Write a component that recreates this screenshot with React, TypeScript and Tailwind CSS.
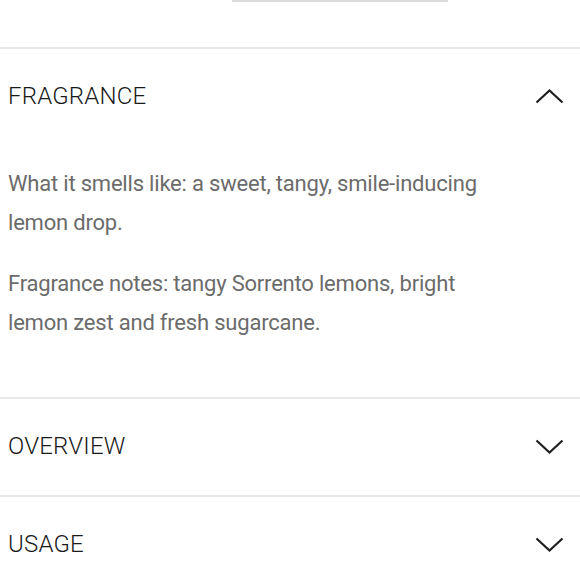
import { useState } from 'react';

type Section = {
  title: string;
  body?: string[];
};

const sections: Section[] = [
  {
    title: 'FRAGRANCE',
    body: [
      'What it smells like: a sweet, tangy, smile-inducing lemon drop.',
      'Fragrance notes: tangy Sorrento lemons, bright lemon zest and fresh sugarcane.',
    ],
  },
  { title: 'OVERVIEW' },
  { title: 'USAGE' },
];

const Chevron = ({ up }: { up: boolean }) => (
  <svg width="29" height="15" viewBox="0 0 29 15" className="shrink-0">
    <path
      d={up ? 'M1.5 13.5 L14.5 1.5 L27.5 13.5' : 'M1.5 1.5 L14.5 13.5 L27.5 1.5'}
      fill="none"
      stroke="#1f1f1f"
      strokeWidth="2.2"
    />
  </svg>
);

const App = () => {
  const [open, setOpen] = useState<string>('FRAGRANCE');

  return (
    <div className="w-[580px] h-[580px] overflow-hidden bg-white font-['Roboto','Noto_Sans',sans-serif]">
      <div className="h-[47px]">
        <div className="ml-[232px] w-[216px] h-[2px] bg-[#dcdcdc]" />
      </div>
      {sections.map((s) => {
        const isOpen = open === s.title;
        return (
          <div key={s.title} className="border-t-2 border-[#e8e8e8]">
            <button
              onClick={() => setOpen(isOpen ? '' : s.title)}
              className="w-full h-[96px] flex items-center justify-between pl-2 pr-[16px] pb-[2px]"
            >
              <span className="text-[24px] leading-none font-light tracking-[0.2px] text-[#1a1a1a]">
                {s.title}
              </span>
              <Chevron up={isOpen} />
            </button>
            {isOpen && s.body && (
              <div className="pl-2 pt-[19px] pb-[55px] flex flex-col gap-[22px]">
                {s.body.map((p) => (
                  <p
                    key={p}
                    className="w-[480px] text-[22px] leading-[39px] tracking-[-0.2px] text-[#6b6b6b]"
                  >
                    {p}
                  </p>
                ))}
              </div>
            )}
          </div>
        );
      })}
    </div>
  );
};

export default App;
